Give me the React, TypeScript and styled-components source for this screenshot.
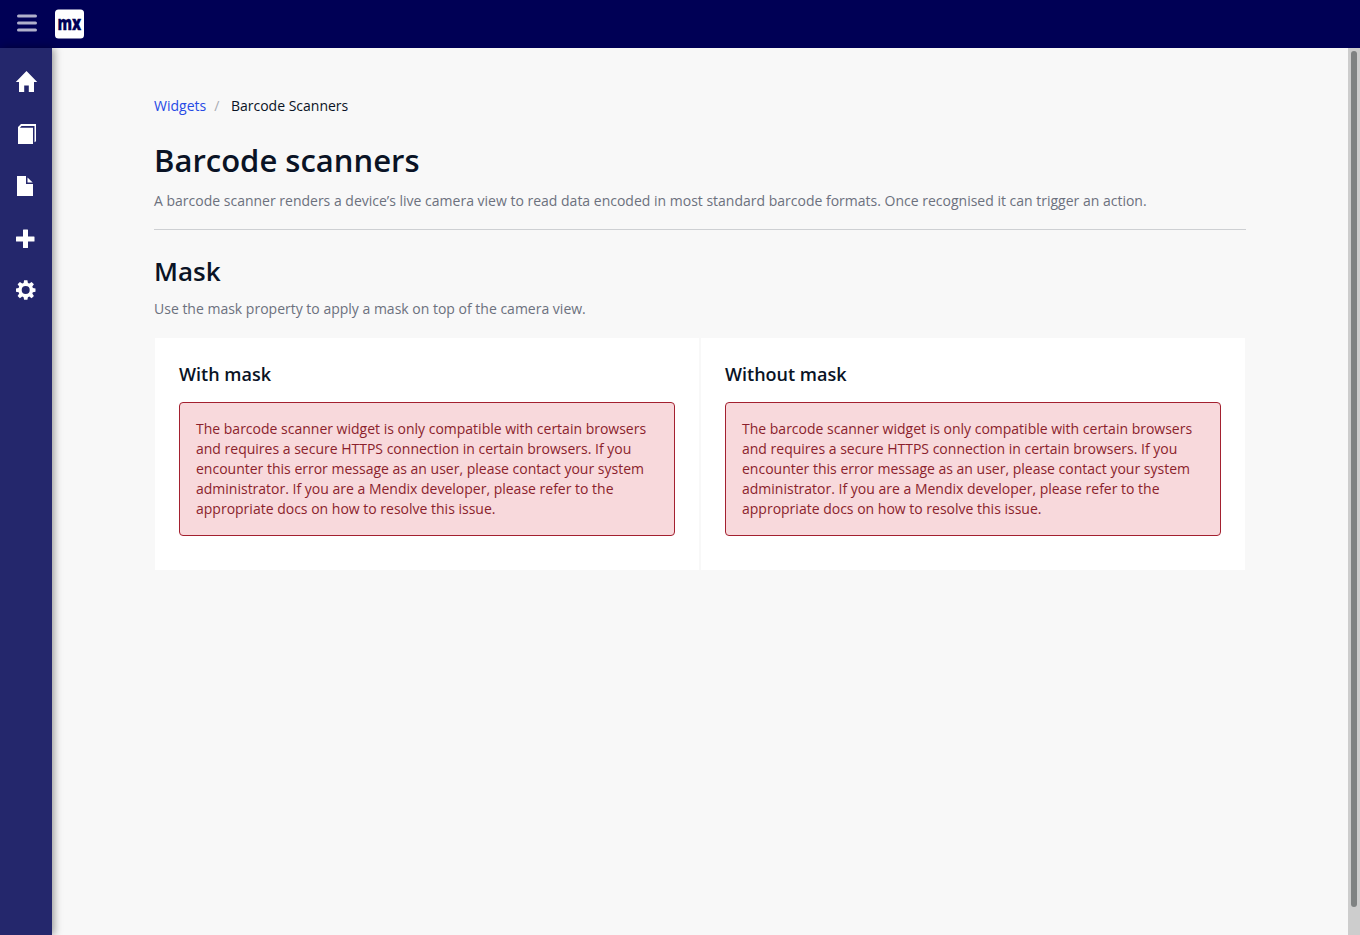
import React from "react";
import styled, { createGlobalStyle } from "styled-components";

const GlobalStyle = createGlobalStyle`
  * { box-sizing: border-box; }
  body { margin: 0; font-family: "Open Sans", sans-serif; font-size: 14px; line-height: 20px; color: #0a1325; background: #f8f8f8; }
  h1, h2, h3, p { margin: 0; }
`;

const Page = styled.div`
  display: flex;
  flex-direction: column;
  height: 100vh;
  overflow: hidden;
`;

const Topbar = styled.header`
  display: flex;
  flex: none;
  align-items: center;
  height: 48px;
  padding-left: 17px;
  background: #000055;
`;

const MenuButton = styled.button`
  width: 20px;
  margin: 0 18px 2px 0;
  padding: 0;
  border: 0;
  background: none;
  color: #b0b0cb;
  svg { display: block; fill: currentColor; }
`;

const Logo = styled.svg`
  display: block;
  width: 29px;
  height: 30px;
  overflow: visible;
  text {
    font-family: "Open Sans", sans-serif;
    font-size: 19px;
    font-weight: 800;
    fill: #000055;
    stroke: #000055;
    stroke-width: 0.3px;
  }
`;

const Body = styled.div`
  display: flex;
  flex: 1;
  min-height: 0;
`;

const Sidebar = styled.nav`
  display: flex;
  flex: none;
  flex-direction: column;
  width: 52px;
  padding-top: 8px;
  background: #24276c;
  box-shadow: 2px 0 8px rgba(0, 0, 0, 0.4);
  z-index: 1;
`;

const NavItem = styled.a`
  height: 52px;
  color: #fff;
  svg { display: block; fill: currentColor; }
`;

const Content = styled.main`
  flex: 1;
  padding: 48px 102px 0;
`;

const Breadcrumb = styled.div`
  display: flex;
`;

const Crumb = styled.span<{ $link?: boolean }>`
  color: ${(p) => (p.$link ? "#264ae5" : "#0a1325")};
`;

const Slash = styled.span`
  padding: 0 11.6px 0 8px;
  color: #a9acb3;
`;

const Title = styled.h1`
  margin-top: 23px;
  font-size: 31px;
  font-weight: 600;
  line-height: 42px;
`;

const Heading = styled.h2`
  margin-top: 23px;
  font-size: 26px;
  font-weight: 600;
  line-height: 36px;
`;

const Lead = styled.p`
  margin-top: 10px;
  color: #6c717e;
`;

const Divider = styled.div`
  height: 1px;
  margin-top: 18px;
  background: #ced0d3;
`;

const Cards = styled.div`
  display: grid;
  grid-template-columns: 1fr 1fr;
  gap: 2px;
  margin-top: 19px;
  padding: 0 1px;
`;

const Card = styled.section`
  height: 232px;
  padding: 24px;
  background: #fff;
`;

const CardTitle = styled.h3`
  font-size: 18px;
  font-weight: 600;
  line-height: 25px;
`;

const Alert = styled.div`
  height: 134px;
  margin-top: 15px;
  padding: 16px;
  border: 1px solid #a3202f;
  border-radius: 4px;
  background: #f8d9dc;
  color: #8b1f2c;
`;

const Scrollbar = styled.div`
  flex: none;
  width: 12px;
  padding: 3px;
  background: #cdcdcd;
`;

const Thumb = styled.div`
  width: 6px;
  height: 856px;
  border-radius: 3px;
  background: #7f8282;
`;

const icons = [
  <path d="M26.5 11 15.8 22H19v10h5.2v-6.5h4.6V32H34V22h3.2z" />,
  <path d="M21 12h15v17.2l-1.5 1V14H21.5l-1.6 1.7h13.1V32H18V15z" />,
  <path d="M17 12h9v8h7v12H17zM27.5 13.5l5.2 5h-5.2z" />,
  <path d="M23 14q0-.5.5-.5h4q.5 0 .5.5v6.5h6q.5 0 .5.5v4q0 .5-.5.5h-6v6q0 .5-.5.5h-4q-.5 0-.5-.5v-6h-6.5q-.5 0-.5-.5v-4q0-.5.5-.5H23z" />,
  <path
    fillRule="evenodd"
    d="m24.1 12.2h3.3l.5 2.7 1.4.6 2.3-1.6 2.3 2.3-1.6 2.3.6 1.4 2.6.5v3.3l-2.6.5-.6 1.4 1.6 2.3-2.3 2.3-2.3-1.6-1.4.6-.5 2.6h-3.3l-.5-2.6-1.4-.6-2.3 1.6-2.3-2.3 1.6-2.3-.6-1.4-2.6-.5v-3.3l2.6-.5.6-1.4-1.6-2.3 2.3-2.3 2.3 1.6 1.4-.6zM25.7 18a4 4 0 1 0 0 8 4 4 0 0 0 0-8z"
  />,
];
const names = ["Home", "Layouts", "Pages", "Widgets", "Settings"];

const message =
  "The barcode scanner widget is only compatible with certain browsers and requires a secure HTTPS connection in certain browsers. If you encounter this error message as an user, please contact your system administrator. If you are a Mendix developer, please refer to the appropriate docs on how to resolve this issue.";

export default function App() {
  return (
    <Page>
      <GlobalStyle />
      <Topbar>
        <MenuButton aria-label="Toggle menu">
          <svg width="20" height="18" viewBox="0 0 20 18">
            <rect y="0.4" width="20" height="3.1" rx="1.5" />
            <rect y="7.4" width="20" height="3.1" rx="1.5" />
            <rect y="14.4" width="20" height="3.1" rx="1.5" />
          </svg>
        </MenuButton>
        <Logo viewBox="0 0 29 30" aria-label="Mendix">
          <rect y="0.5" width="29" height="29" rx="3.5" fill="#fff" />
          <text x="2.4" y="20.7" textLength="23.8" lengthAdjust="spacingAndGlyphs">
            mx
          </text>
        </Logo>
      </Topbar>
      <Body>
        <Sidebar>
          {icons.map((icon, i) => (
            <NavItem key={names[i]} aria-label={names[i]}>
              <svg width="52" height="52" viewBox="0 -4 52 52">{icon}</svg>
            </NavItem>
          ))}
        </Sidebar>
        <Content>
          <Breadcrumb>
            <Crumb $link>Widgets</Crumb>
            <Slash>/</Slash>
            <Crumb>Barcode Scanners</Crumb>
          </Breadcrumb>
          <Title>Barcode scanners</Title>
          <Lead>
            A barcode scanner renders a device’s live camera view to read data encoded in most standard barcode formats. Once recognised it can trigger an action.
          </Lead>
          <Divider />
          <Heading>Mask</Heading>
          <Lead>Use the mask property to apply a mask on top of the camera view.</Lead>
          <Cards>
            {["With mask", "Without mask"].map((title) => (
              <Card key={title}>
                <CardTitle>{title}</CardTitle>
                <Alert>{message}</Alert>
              </Card>
            ))}
          </Cards>
        </Content>
        <Scrollbar>
          <Thumb />
        </Scrollbar>
      </Body>
    </Page>
  );
}
